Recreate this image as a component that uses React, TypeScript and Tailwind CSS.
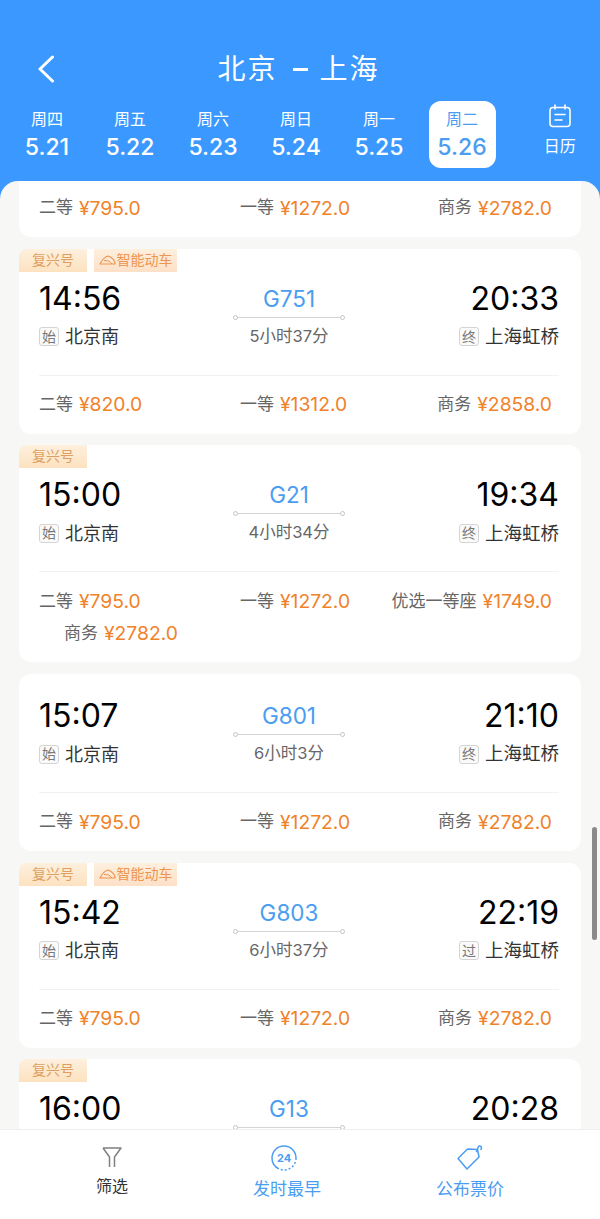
import React from 'react';

const days = [
  { week: '周四', date: '5.21' },
  { week: '周五', date: '5.22' },
  { week: '周六', date: '5.23' },
  { week: '周日', date: '5.24' },
  { week: '周一', date: '5.25' },
  { week: '周二', date: '5.26', active: true }
];

interface Train {
  no: string;
  from: string;
  to: string;
  stop: string;
  duration: string;
  fuxing?: boolean;
  smart?: boolean;
  prices: { label: string; price: string }[];
}

const basePrices = [
  { label: '二等', price: '¥795.0' },
  { label: '一等', price: '¥1272.0' },
  { label: '商务', price: '¥2782.0' }
];

const trains: Train[] = [
  {
    no: 'G751',
    from: '14:56',
    to: '20:33',
    stop: '终',
    duration: '5小时37分',
    fuxing: true,
    smart: true,
    prices: [
      { label: '二等', price: '¥820.0' },
      { label: '一等', price: '¥1312.0' },
      { label: '商务', price: '¥2858.0' }
    ]
  },
  {
    no: 'G21',
    from: '15:00',
    to: '19:34',
    stop: '终',
    duration: '4小时34分',
    fuxing: true,
    prices: [
      { label: '二等', price: '¥795.0' },
      { label: '一等', price: '¥1272.0' },
      { label: '优选一等座', price: '¥1749.0' },
      { label: '商务', price: '¥2782.0' }
    ]
  },
  { no: 'G801', from: '15:07', to: '21:10', stop: '终', duration: '6小时3分', prices: basePrices },
  { no: 'G803', from: '15:42', to: '22:19', stop: '过', duration: '6小时37分', fuxing: true, smart: true, prices: basePrices },
  { no: 'G13', from: '16:00', to: '20:28', stop: '终', duration: '4小时28分', fuxing: true, prices: basePrices }
];

function StopBadge({ text }: { text: string }) {
  return (
    <span className="w-[20px] h-[19px] rounded-[3px] border border-[#d4d4d4] bg-[#fafafa] text-[#777] text-[14px] leading-none flex items-center justify-center">
      {text}
    </span>
  );
}

function PriceRows({ prices }: { prices: Train['prices'] }) {
  return (
    <div className="grid grid-cols-[201px_1fr_auto] pl-5 pr-[29px]">
      {prices.map((item, i) =>
        <div
          key={item.label}
          className={`h-8 flex items-center gap-[6px] whitespace-nowrap ${i === 2 ? 'justify-end' : ''} ${i === 3 ? 'ml-[25px]' : ''}`}>
          <span className="text-[17px] text-[#666]">{item.label}</span>
          <span className="text-[19.300px] text-[#f0822a]">{item.price}</span>
        </div>
      )}
    </div>
  );
}

function TrainCard({ train }: { train: Train }) {
  const tagged = train.fuxing || train.smart;
  return (
    <div className={`relative shrink-0 bg-white rounded-[12px] pb-[13px] ${tagged ? 'pt-[31px]' : 'pt-[23px]'}`}>
      {tagged &&
        <div className="absolute left-0 top-0 flex gap-[7px]">
          <span className="w-[68px] h-[23px] pb-[2px] rounded-tl-[8px] bg-gradient-to-b from-[#fdf0de] to-[#fde2c0] text-[#dd9f63] text-[14px] flex items-center justify-center">
            复兴号
          </span>
          {train.smart &&
            <span className="w-[83px] h-[23px] pb-[2px] bg-gradient-to-b from-[#fdf0de] to-[#fde0c8] text-[#ee9550] text-[14px] flex items-center justify-center gap-[1px]">
              <svg width="17" height="11" viewBox="0 0 17 11" fill="none">
                <path d="M1 10h15c.5-3-3-6.500-6.500-8C5.500 2.500 3 6 1 10z" stroke="#ee9550" strokeWidth="1.200" strokeLinejoin="round" />
                <path d="M5 6.500l5 .5 3 3" stroke="#ee9550" strokeWidth="1" />
              </svg>
              智能动车
            </span>
          }
        </div>
      }
      <div className="grid grid-cols-[194px_112px_1fr] pl-5 pr-[22px]">
        <div>
          <div className="h-9 text-[32px] leading-[38px] text-black">{train.from}</div>
          <div className="mt-[8px] h-[26px] flex items-center gap-[6px]">
            <StopBadge text="始" />
            <span className="text-[18px] text-[#333]">北京南</span>
          </div>
        </div>
        <div className="flex flex-col items-center">
          <div className="h-[34px] text-[22.500px] leading-[37px] text-[#4a9df0]">{train.no}</div>
          <div className="w-full h-[7px] flex items-center">
            <span className="w-[5px] h-[5px] rounded-full border border-[#c4c4c4] shrink-0" />
            <span className="flex-1 h-px bg-[#d4d4d4]" />
            <span className="w-[5px] h-[5px] rounded-full border border-[#c4c4c4] shrink-0" />
          </div>
          <div className="mt-[2px] h-[26px] leading-[26px] text-[16.500px] text-[#666] whitespace-nowrap">{train.duration}</div>
        </div>
        <div>
          <div className="h-9 text-[32px] leading-[38px] text-black text-right">{train.to}</div>
          <div className="mt-[8px] h-[26px] flex items-center justify-end gap-[6px]">
            <StopBadge text={train.stop} />
            <span className="text-[18.500px] text-[#333]">上海虹桥</span>
          </div>
        </div>
      </div>
      <div className="ml-5 mr-[22px] mt-[25px] mb-[13px] h-px bg-[#f2f2f2]" />
      <PriceRows prices={train.prices} />
    </div>
  );
}

export default function App() {
  return (
    <div className="w-[600px] h-[1219px] flex flex-col overflow-hidden bg-[#3b98ff] font-['Inter','Noto_Sans_CJK_SC',sans-serif]">
      <div className="h-[181px] shrink-0 text-white">
        <div className="h-[101px] pt-[50px] relative">
          <svg className="absolute left-[37px] top-[55px]" width="18" height="28" viewBox="0 0 18 28" fill="none">
            <path d="M15.500 2 3 14l12.500 12" stroke="white" strokeWidth="3" strokeLinecap="round" strokeLinejoin="round" />
          </svg>
          <div className="flex items-center justify-center text-[28px] leading-[38px] tracking-[2px] pr-[3px]">
            <span>北京</span>
            <span className="w-[15px] h-[3px] bg-white ml-[15px] mr-[12px]" />
            <span>上海</span>
          </div>
        </div>
        <div className="flex pl-[5.500px]">
          {days.map((d) =>
            <div key={d.date} className="w-[83px] flex justify-center">
              <div className={`w-[67px] h-[67px] rounded-[12px] flex flex-col items-center pt-[7px] ${d.active ? 'bg-white text-[#4a9df0]' : ''}`}>
                <span className="text-[16px] leading-[22px]">{d.week}</span>
                <span className="text-[23px] font-medium leading-[30px] mt-[2px]">{d.date}</span>
              </div>
            </div>
          )}
          <div className="flex-1 flex flex-col items-center pt-[3px] pl-[16px]">
            <svg width="24" height="24" viewBox="0 0 24 24" fill="none" stroke="white" strokeWidth="1.600" strokeLinecap="round">
              <rect x="2" y="3.500" width="20" height="19" rx="3" />
              <path d="M7 1v4M17 1v4M7 10.500h10M7 16h7" />
            </svg>
            <span className="text-[16px] leading-[20px] mt-[8px]">日历</span>
          </div>
        </div>
      </div>
      <div className="relative flex-1 min-h-0 overflow-hidden rounded-t-[18px] bg-[#f7f7f5] px-[19px] flex flex-col gap-[11.700px]">
        <div className="shrink-0 bg-white rounded-b-[12px] pt-[11px] pb-[13px]">
          <PriceRows prices={basePrices} />
        </div>
        {trains.map((t) => <TrainCard key={t.no} train={t} />)}
        <div className="absolute left-[592px] top-[646px] w-[5px] h-[113px] rounded-full bg-[#8a8a8a]" />
      </div>
      <div className="h-[90px] shrink-0 bg-white border-t border-[#eeeeee] relative z-10 grid grid-cols-[226px_122px_244px]">
        <div className="flex flex-col items-center pt-[16px] pr-[2px]">
          <svg width="22" height="22" viewBox="0 0 22 22" fill="none" stroke="#808080" strokeWidth="1.500" strokeLinejoin="round">
            <path d="M2 2h18l-6.500 9v10M8.500 21V11L2 2" />
          </svg>
          <span className="text-[16px] leading-[22px] mt-[7px] text-[#333]">筛选</span>
        </div>
        <div className="flex flex-col items-center pt-[15px]">
          <svg className="-ml-[7px]" width="26" height="26" viewBox="0 0 26 26" fill="none">
            <circle cx="13" cy="13" r="12" stroke="#4a9df0" strokeWidth="1.500" strokeDasharray="2 2 2 2 2 2 2 2 2 2 2 2 51.400" />
            <text x="13" y="17" textAnchor="middle" fontSize="11" fontWeight="700" fill="#4a9df0">24</text>
          </svg>
          <span className="text-[17px] leading-[24px] mt-[6px] text-[#4a9df0] whitespace-nowrap">发时最早</span>
        </div>
        <div className="flex flex-col items-center pt-[15px]">
          <svg width="26" height="26" viewBox="0 0 26 26" fill="none" stroke="#4a9df0" strokeWidth="1.500" strokeLinejoin="round" strokeLinecap="round">
            <path d="M1 13.500 10.500 4 20.500 4.500 22 12 10 24z" />
            <path d="M19.500 6.500c1.500-2 1-4.500 2.500-5.500 2-.5 3 1.500 2 3.500" />
          </svg>
          <span className="text-[17px] leading-[24px] mt-[6px] text-[#4a9df0] whitespace-nowrap">公布票价</span>
        </div>
      </div>
    </div>
  );
}
